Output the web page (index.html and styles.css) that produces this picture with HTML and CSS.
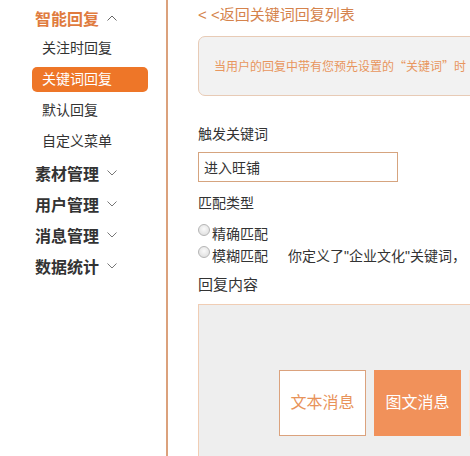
FILE: index.html
```html
<!DOCTYPE html>
<html lang="zh-CN">
<head>
    <meta charset="UTF-8">
    <title>关键词回复</title>
    <link rel="stylesheet" href="styles.css">
</head>
<body>
    <div class="page">
        <!-- 左侧菜单 -->
        <aside class="sidebar">
            <div class="group open">
                <div class="group-title">智能回复
                    <svg class="chev" width="10" height="6" viewBox="0 0 10 6"><path d="M0.5 5.5 L5 1 L9.5 5.5" fill="none" stroke="#666" stroke-width="1"/></svg>
                </div>
                <div class="sub-list">
                    <a class="sub-item">关注时回复</a>
                    <a class="sub-item active">关键词回复</a>
                    <a class="sub-item">默认回复</a>
                    <a class="sub-item">自定义菜单</a>
                </div>
            </div>
            <div class="group-title">素材管理
                <svg class="chev" width="10" height="6" viewBox="0 0 10 6"><path d="M0.5 0.5 L5 5 L9.5 0.5" fill="none" stroke="#777" stroke-width="1"/></svg>
            </div>
            <div class="group-title">用户管理
                <svg class="chev" width="10" height="6" viewBox="0 0 10 6"><path d="M0.5 0.5 L5 5 L9.5 0.5" fill="none" stroke="#777" stroke-width="1"/></svg>
            </div>
            <div class="group-title">消息管理
                <svg class="chev" width="10" height="6" viewBox="0 0 10 6"><path d="M0.5 0.5 L5 5 L9.5 0.5" fill="none" stroke="#777" stroke-width="1"/></svg>
            </div>
            <div class="group-title">数据统计
                <svg class="chev" width="10" height="6" viewBox="0 0 10 6"><path d="M0.5 0.5 L5 5 L9.5 0.5" fill="none" stroke="#777" stroke-width="1"/></svg>
            </div>
        </aside>

        <!-- 主内容 -->
        <main class="main">
            <a class="back-link">&lt; &lt;返回关键词回复列表</a>

            <div class="tip-box">当用户的回复中带有您预先设置的“关键词”时</div>

            <div class="label first">触发关键词</div>
            <input class="keyword-input" type="text" value="进入旺铺">

            <div class="label">匹配类型</div>
            <label class="radio-row first-radio"><input type="radio" name="match">精确匹配</label>
            <label class="radio-row"><input type="radio" name="match">模糊匹配<span class="hint">你定义了"企业文化"关键词，</span></label>

            <div class="label reply-label">回复内容</div>
            <div class="reply-box">
                <div class="type-buttons">
                    <div class="type-btn">文本消息</div>
                    <div class="type-btn selected">图文消息</div>
                    <div class="type-btn light"></div>
                </div>
            </div>
        </main>
    </div>
</body>
</html>
```

FILE: styles.css
```css
/* 基础 */
html, body {
    margin: 0;
    padding: 0;
    overflow: hidden;
    background: #fff;
}

body {
    font-family: "Liberation Sans", "Noto Sans CJK SC", sans-serif;
    color: #333;
}

.page {
    display: flex;
    height: 456px;
}

/* 左侧菜单 */
.sidebar {
    flex: none;
    width: 166px;
    border-right: 2px solid #dba17c;
    padding-top: 2px;
}

.group-title {
    display: flex;
    align-items: center;
    height: 31px;
    padding-left: 35px;
    font-size: 16px;
    font-weight: bold;
    color: #333;
}

.group.open .group-title {
    color: #e07b3e;
}

.chev {
    margin-left: 8px;
}

.sub-list {
    display: flex;
    flex-direction: column;
    gap: 6px;
    padding: 3px 0;
}

.sub-item {
    display: block;
    width: 106px;
    height: 25px;
    line-height: 25px;
    margin-left: 32px;
    padding-left: 10px;
    font-size: 14px;
    color: #333;
    border-radius: 5px;
}

.sub-item.active {
    background: #ee7628;
    color: #fff;
}

/* 主内容 */
.main {
    flex: none;
    width: 700px;
    padding-left: 30px;
}

.back-link {
    display: block;
    margin-top: 5px;
    line-height: 20px;
    font-size: 15px;
    color: #d5834c;
}

.tip-box {
    box-sizing: border-box;
    margin-top: 11px;
    height: 60px;
    line-height: 58px;
    padding-left: 15px;
    border: 1px solid #e8cbb6;
    border-radius: 7px;
    background: #f2f2f2;
    font-family: "Noto Sans CJK SC", sans-serif;
    font-size: 12px;
    color: #e8965e;
    white-space: nowrap;
}

.label {
    margin-top: 11px;
    line-height: 20px;
    font-size: 14px;
    color: #333;
}

.label.first {
    margin-top: 28px;
}

.keyword-input {
    display: block;
    box-sizing: border-box;
    margin: 8px 0 0;
    width: 200px;
    height: 30px;
    padding: 0 5px;
    border: 1px solid #d6a47f;
    outline: none;
    font-family: inherit;
    font-size: 14px;
    color: #333;
}

.radio-row {
    display: flex;
    align-items: center;
    height: 22px;
    font-size: 14px;
    color: #333;
    white-space: nowrap;
}

.radio-row.first-radio {
    margin-top: 9px;
}

.radio-row input {
    appearance: none;
    -webkit-appearance: none;
    box-sizing: border-box;
    width: 12px;
    height: 12px;
    margin: -6px 2px 0 0;
    border: 1px solid #b5b5b5;
    border-radius: 50%;
    background: radial-gradient(circle at 50% 40%, #fafafa 0, #e3e3e3 70%);
}

.hint {
    margin-left: 20px;
}

.label.reply-label {
    margin-top: 8px;
    line-height: 22px;
    font-size: 15px;
}

.reply-box {
    margin-top: 8px;
    height: 200px;
    border: 1px solid #f0cdb4;
    background: #eeeeee;
}

.type-buttons {
    display: flex;
    gap: 8px;
    padding: 65px 0 0 80px;
}

.type-btn {
    box-sizing: border-box;
    width: 87px;
    height: 66px;
    line-height: 64px;
    text-align: center;
    font-size: 16px;
    background: #fff;
    border: 1px solid #dba27d;
    color: #e8935a;
}

.type-btn.selected {
    background: #f1915a;
    border-color: #f1915a;
    color: #fff;
}

.type-btn.light {
    background: #fde4d2;
    border-color: #fde4d2;
}
```
